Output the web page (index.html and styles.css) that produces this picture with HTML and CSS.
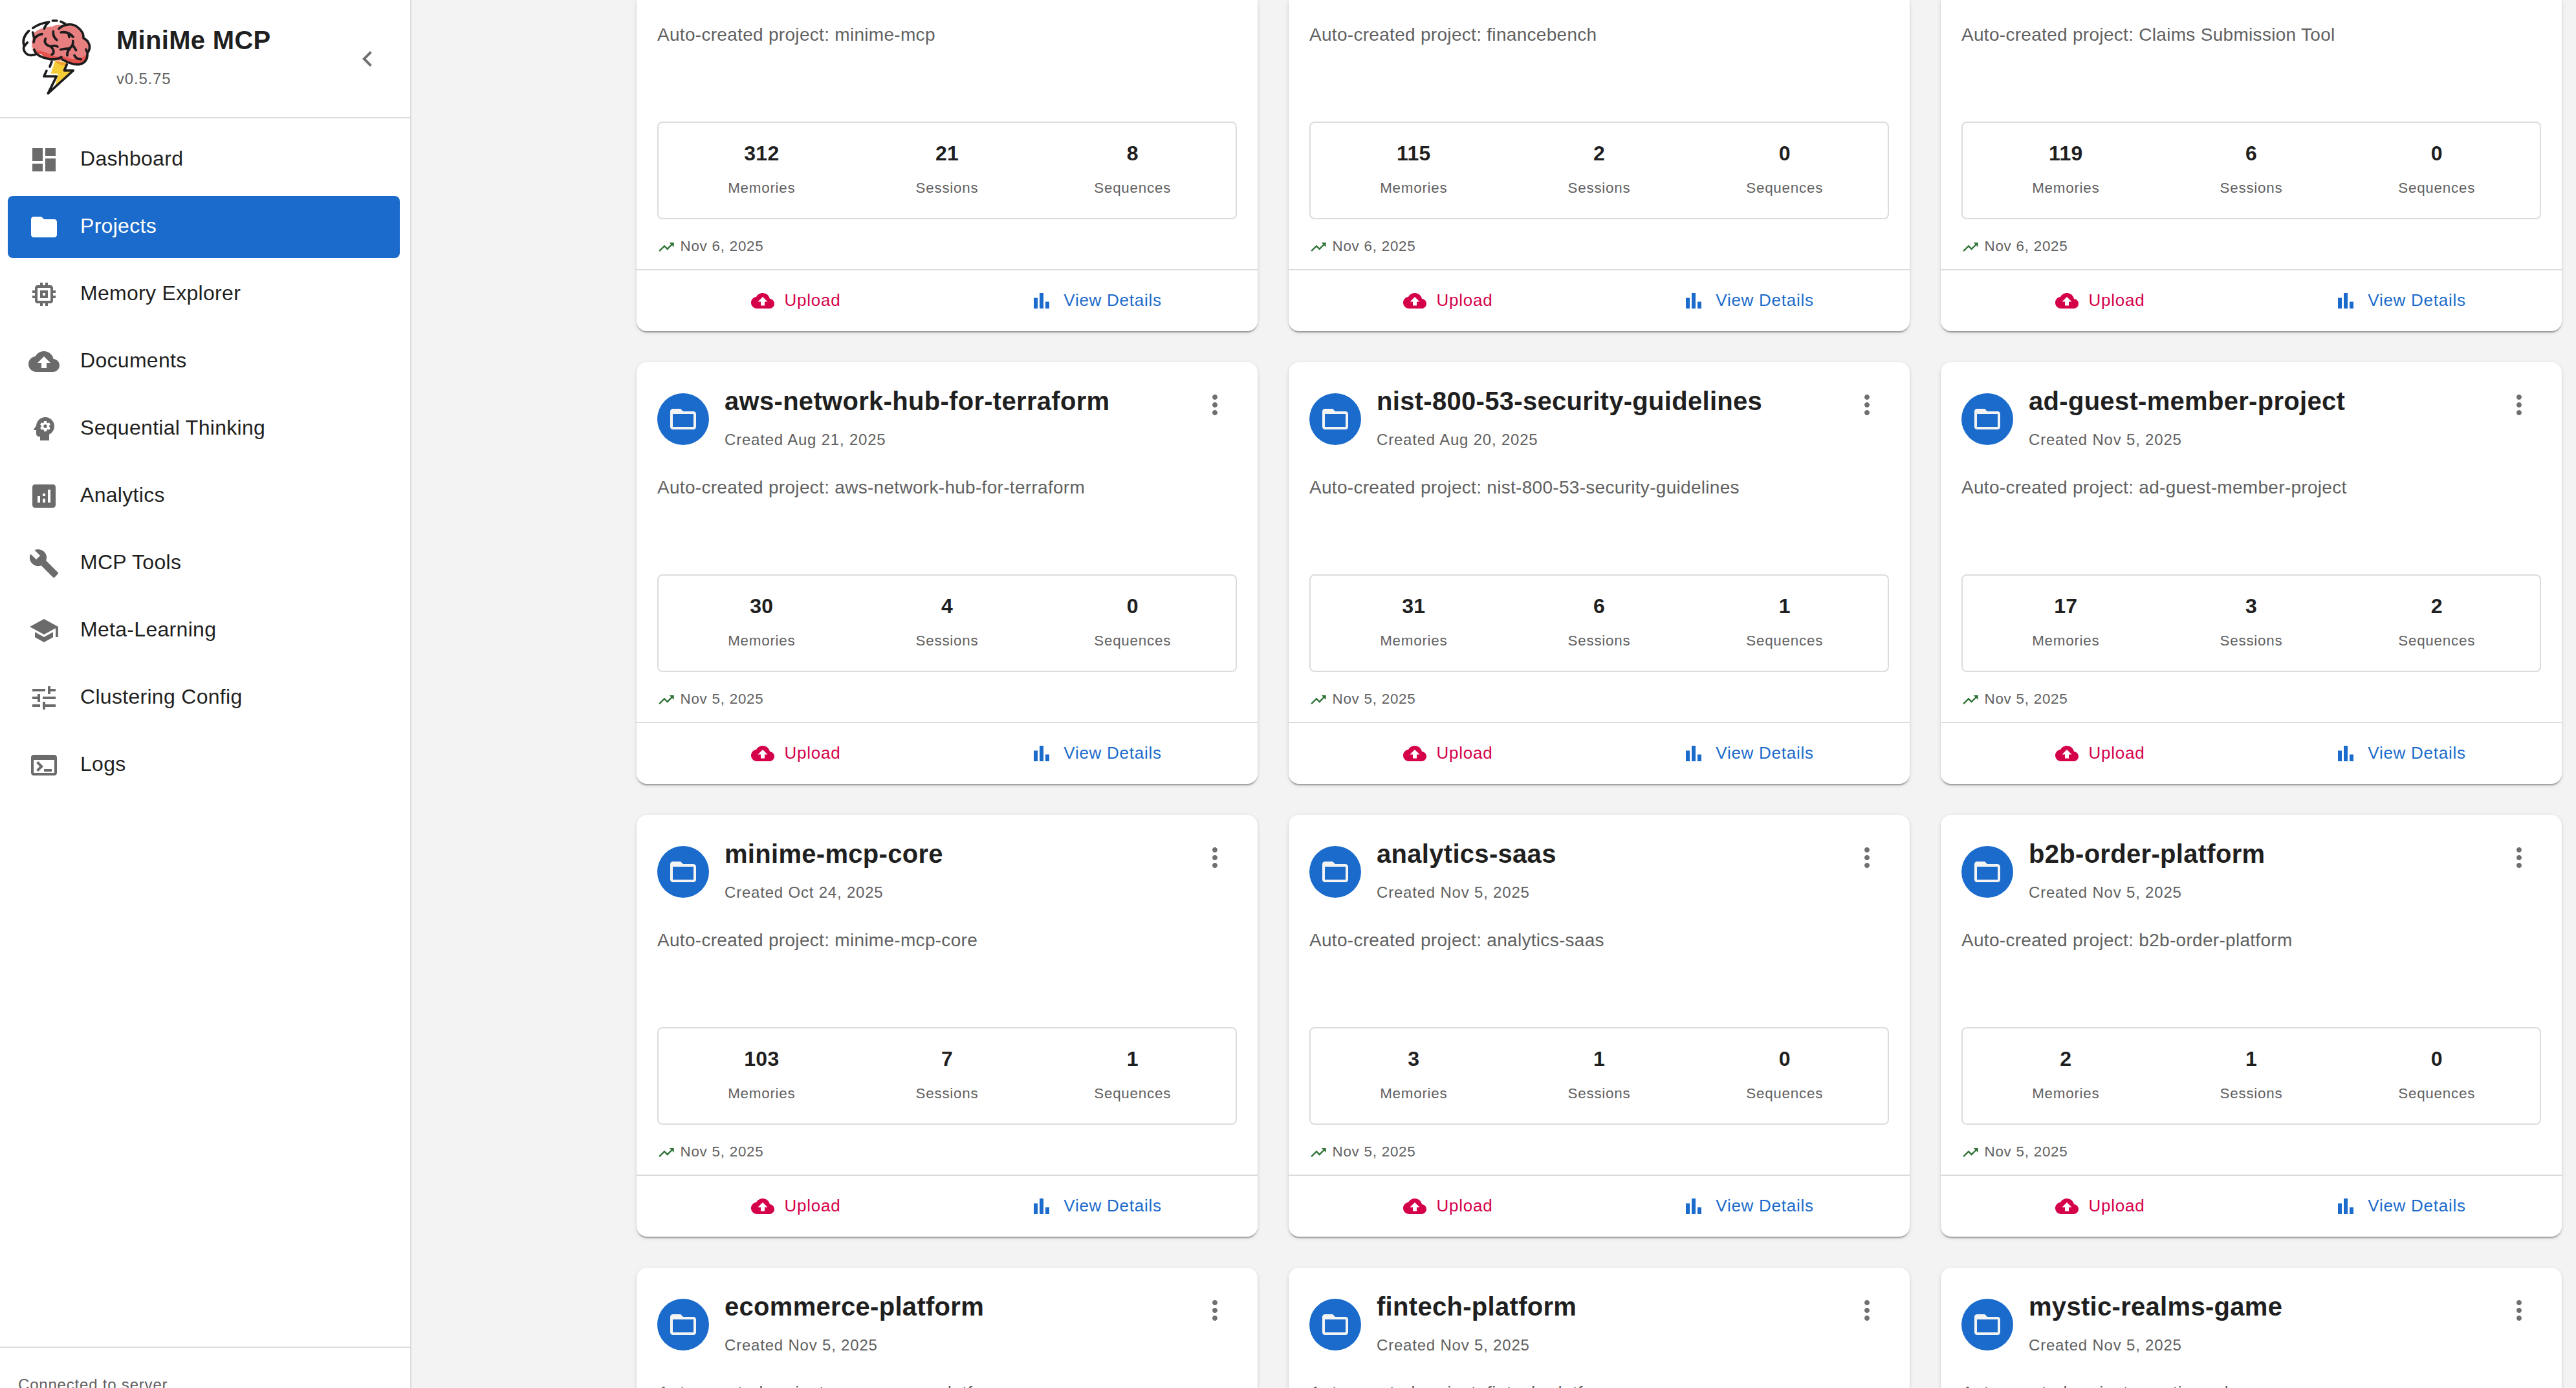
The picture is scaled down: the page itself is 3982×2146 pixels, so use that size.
FILE: index.html
```html
<!DOCTYPE html>
<html lang="en">
<head>
  <meta charset="UTF-8">
  <meta name="viewport" content="width=device-width, initial-scale=1.0">
  <title>MiniMe MCP</title>
  <link rel="stylesheet" href="styles.css">
</head>
<body>
  <svg class="sprite" aria-hidden="true">
    <symbol id="dashboard" viewBox="0 0 24 24"><path d="M3 13h8V3H3v10zm0 8h8v-6H3v6zm10 0h8V11h-8v10zm0-18v6h8V3h-8z"/></symbol>
    <symbol id="folder" viewBox="0 0 24 24"><path d="M10 4H4c-1.1 0-1.99.9-1.99 2L2 18c0 1.1.9 2 2 2h16c1.1 0 2-.9 2-2V8c0-1.1-.9-2-2-2h-8l-2-2z"/></symbol>
    <symbol id="memory" viewBox="0 0 24 24"><path d="M15 9H9v6h6V9zm-2 4h-2v-2h2v2zm8-2V9h-2V7c0-1.1-.9-2-2-2h-2V3h-2v2h-2V3H9v2H7c-1.1 0-2 .9-2 2v2H3v2h2v2H3v2h2v2c0 1.1.9 2 2 2h2v2h2v-2h2v2h2v-2h2c1.1 0 2-.9 2-2v-2h2v-2h-2v-2h2zm-4 6H7V7h10v10z"/></symbol>
    <symbol id="cloud" viewBox="0 0 24 24"><path d="M19.35 10.04C18.67 6.59 15.64 4 12 4 9.11 4 6.6 5.64 5.35 8.04 2.34 8.36 0 10.91 0 14c0 3.31 2.69 6 6 6h13c2.76 0 5-2.24 5-5 0-2.64-2.05-4.78-4.65-4.96zM14 13v4h-4v-4H7l5-5 5 5h-3z"/></symbol>
    <symbol id="psychology" viewBox="0 0 24 24"><path d="M13 8.57c-.79 0-1.43.64-1.43 1.43s.64 1.43 1.43 1.43 1.43-.64 1.43-1.43-.64-1.43-1.43-1.43z"/><path d="M13 3C9.25 3 6.2 5.94 6.02 9.64L4.1 12.2c-.25.33-.01.8.4.8H6v3c0 1.1.9 2 2 2h1v3h7v-4.68c2.36-1.12 4-3.53 4-6.32 0-3.87-3.13-7-7-7zm3 7c0 .13-.01.26-.02.39l.83.66c.08.06.1.16.05.25l-.8 1.39c-.05.09-.16.12-.24.09l-.99-.4c-.21.16-.43.29-.67.39L14 13.83c-.01.1-.1.17-.2.17h-1.6c-.1 0-.18-.07-.2-.17l-.15-1.06c-.25-.1-.47-.23-.68-.39l-.99.4c-.09.03-.2 0-.25-.09l-.8-1.39c-.05-.08-.03-.19.05-.25l.84-.66c-.01-.13-.02-.26-.02-.39s.02-.27.04-.39l-.85-.66c-.08-.06-.1-.16-.05-.26l.8-1.38c.05-.09.15-.12.24-.09l1 .4c.2-.15.43-.29.67-.39L12 6.17c.02-.1.1-.17.2-.17h1.6c.1 0 .18.07.2.17l.15 1.06c.24.1.46.23.67.39l1-.4c.09-.03.2 0 .24.09l.8 1.38c.05.09.03.2-.05.26l-.85.66c.03.12.04.25.04.39z"/></symbol>
    <symbol id="analytics" viewBox="0 0 24 24"><path d="M19 3H5c-1.1 0-2 .9-2 2v14c0 1.1.9 2 2 2h14c1.1 0 2-.9 2-2V5c0-1.1-.9-2-2-2zM9 17H7v-5h2v5zm4 0h-2v-3h2v3zm0-5h-2v-2h2v2zm4 5h-2V7h2v10z"/></symbol>
    <symbol id="build" viewBox="0 0 24 24"><path d="m22.7 19-9.1-9.1c.9-2.3.4-5-1.5-6.9-2-2-5-2.4-7.4-1.3L9 6 6 9 1.6 4.7C.4 7.1.9 10.1 2.9 12.1c1.9 1.9 4.6 2.4 6.9 1.5l9.1 9.1c.4.4 1 .4 1.4 0l2.3-2.3c.5-.4.5-1.1.1-1.4z"/></symbol>
    <symbol id="school" viewBox="0 0 24 24"><path d="M5 13.18v4L12 21l7-3.82v-4L12 17l-7-3.82zM12 3 1 9l11 6 9-4.91V17h2V9L12 3z"/></symbol>
    <symbol id="tune" viewBox="0 0 24 24"><path d="M3 17v2h6v-2H3zM3 5v2h10V5H3zm10 16v-2h8v-2h-8v-2h-2v6h2zM7 9v2H3v2h4v2h2V9H7zm14 4v-2H11v2h10zm-6-4h2V7h4V5h-4V3h-2v6z"/></symbol>
    <symbol id="terminal" viewBox="0 0 24 24"><path d="M20 4H4c-1.11 0-2 .9-2 2v12c0 1.1.89 2 2 2h16c1.1 0 2-.9 2-2V6c0-1.1-.89-2-2-2zm0 14H4V8h16v10zm-2-1h-6v-2h6v2zM7.5 17l-1.41-1.41L8.67 13l-2.59-2.59L7.5 9l4 4-4 4z"/></symbol>
    <symbol id="folder-open" viewBox="0 0 24 24"><path d="M20 6h-8l-2-2H4c-1.1 0-1.99.9-1.99 2L2 18c0 1.1.9 2 2 2h16c1.1 0 2-.9 2-2V8c0-1.1-.9-2-2-2zm0 12H4V8h16v10z"/></symbol>
    <symbol id="trending" viewBox="0 0 24 24"><path d="m16 6 2.29 2.29-4.88 4.88-4-4L2 16.59 3.41 18l6-6 4 4 6.3-6.29L22 12V6z"/></symbol>
    <symbol id="bars" viewBox="0 0 24 24"><path d="M4 9h4v11H4zm12 4h4v7h-4zm-6-9h4v16h-4z"/></symbol>
    <symbol id="more" viewBox="0 0 24 24"><path d="M12 8c1.1 0 2-.9 2-2s-.9-2-2-2-2 .9-2 2 .9 2 2 2zm0 2c-1.1 0-2 .9-2 2s.9 2 2 2 2-.9 2-2-.9-2-2-2zm0 6c-1.1 0-2 .9-2 2s.9 2 2 2 2-.9 2-2-.9-2-2-2z"/></symbol>
    <symbol id="chevron" viewBox="0 0 24 24"><path d="M15.41 7.41 14 6l-6 6 6 6 1.41-1.41L10.83 12z"/></symbol>
  </svg>

  <aside class="sidebar">
    <header class="brand">
      <svg class="logo" viewBox="0 0 390 390">
        <!-- brain -->
        <path fill="#e77f80" d="M92 100C112 72 150 66 185 62c20-10 45-6 58-2 30-8 60 4 72 28l14 25c18 10 28 30 22 52-6 14-12 18-14 32 4 22-10 38-30 42-30 4-55-8-72-20-30 6-75-2-95-28-24 0-44-16-52-36 0-30 4-42 5-55z"/>
        <path fill="#e5534d" d="M82 148c4 18 10 26 24 27 22-2 50 8 74 22 20 8 40 4 62 6 30 14 60 12 82 2 10-4 14-10 16-20 2 20 0 38-20 50-24 12-62 6-90-18-40 6-80-2-98-26-26 2-46-14-50-43z"/>
        <!-- lightning bolt -->
        <path fill="#f6cc36" d="M196 220l56 12-18 37 38 2-76 66 14-56h-34z"/>
        <path fill="#f0a330" d="M198 221l54 12-5 10c-20 2-36-4-46-14z"/>
        <g fill="none" stroke="#1c1c1c" stroke-width="11" stroke-linecap="round" stroke-linejoin="round">
          <path d="M184 36h20M222 40l20 10M93 70c22-16 46-24 74-28-12 10-18 18-22 31"/>
          <path d="M74 83C52 104 44 130 52 153c-8 20 8 44 32 43l18-2"/>
          <path d="M67 137l-14 17M213 73c26-24 64-26 88-6 18 14 28 28 26 50 26 12 38 42 20 66-4-4-8-8-8-14"/>
          <path d="M345 184c2 28-8 48-36 54-24 4-52-6-80-22"/>
          <path d="M99 170c2 20 30 36 62 42 24 8 50 0 64-7"/>
          <path d="M92 90c2 14 4 20 8 28l-4 18M101 118c10-12 18-18 34-20M187 86c-2 18 4 30 17 40"/>
          <path d="M151 120c-8 16 0 28 24 36M180 193c12-6 12-20-4-37 10-4 20-6 31 0"/>
          <path d="M223 90c24-4 40 2 56 21M258 97l3 15M278 130c2 14-2 26-15 33M278 150l15 23"/>
          <path d="M221 170c16-4 28-6 43-4-10 10-14 18-12 31M285 197c6 12 16 18 30 18"/>
          <path d="M180 226l-9 23M156 268l-12 26h58l-39 79 117-106h-42l12-28"/>
        </g>
      </svg>
      <div class="brand-text">
        <h1 class="brand-name">MiniMe MCP</h1>
        <p class="brand-version">v0.5.75</p>
      </div>
      <button class="icon-btn" aria-label="Collapse"><svg class="icon"><use href="#chevron"/></svg></button>
    </header>

    <nav class="nav">
      <a class="nav-item"><svg class="icon"><use href="#dashboard"/></svg><span>Dashboard</span></a>
      <a class="nav-item active"><svg class="icon"><use href="#folder"/></svg><span>Projects</span></a>
      <a class="nav-item"><svg class="icon"><use href="#memory"/></svg><span>Memory Explorer</span></a>
      <a class="nav-item"><svg class="icon"><use href="#cloud"/></svg><span>Documents</span></a>
      <a class="nav-item"><svg class="icon"><use href="#psychology"/></svg><span>Sequential Thinking</span></a>
      <a class="nav-item"><svg class="icon"><use href="#analytics"/></svg><span>Analytics</span></a>
      <a class="nav-item"><svg class="icon"><use href="#build"/></svg><span>MCP Tools</span></a>
      <a class="nav-item"><svg class="icon"><use href="#school"/></svg><span>Meta-Learning</span></a>
      <a class="nav-item"><svg class="icon"><use href="#tune"/></svg><span>Clustering Config</span></a>
      <a class="nav-item"><svg class="icon"><use href="#terminal"/></svg><span>Logs</span></a>
    </nav>

    <footer class="status">Connected to server</footer>
  </aside>

  <main class="content">
    <div class="grid" id="projects"></div>
  </main>

  <script>
    // name, created, memories, sessions, sequences, last activity
    const projects = [
      ['minime-mcp', '', 312, 21, 8, 'Nov 6, 2025'],
      ['financebench', '', 115, 2, 0, 'Nov 6, 2025'],
      ['Claims Submission Tool', '', 119, 6, 0, 'Nov 6, 2025'],
      ['aws-network-hub-for-terraform', 'Aug 21, 2025', 30, 4, 0, 'Nov 5, 2025'],
      ['nist-800-53-security-guidelines', 'Aug 20, 2025', 31, 6, 1, 'Nov 5, 2025'],
      ['ad-guest-member-project', 'Nov 5, 2025', 17, 3, 2, 'Nov 5, 2025'],
      ['minime-mcp-core', 'Oct 24, 2025', 103, 7, 1, 'Nov 5, 2025'],
      ['analytics-saas', 'Nov 5, 2025', 3, 1, 0, 'Nov 5, 2025'],
      ['b2b-order-platform', 'Nov 5, 2025', 2, 1, 0, 'Nov 5, 2025'],
      ['ecommerce-platform', 'Nov 5, 2025'],
      ['fintech-platform', 'Nov 5, 2025'],
      ['mystic-realms-game', 'Nov 5, 2025']
    ];

    const icon = (name, cls) => `<svg class="icon ${cls || ''}"><use href="#${name}"/></svg>`;

    function header(name, created) {
      return `
        <div class="card-header">
          <div class="avatar">${icon('folder-open')}</div>
          <div class="card-heading">
            <h2 class="card-title">${name}</h2>
            <p class="card-created">Created ${created}</p>
          </div>
          <button class="icon-btn" aria-label="More">${icon('more')}</button>
        </div>`;
    }

    function details(memories, sessions, sequences, updated) {
      return `
        <div class="stats">
          <div class="stat"><strong>${memories}</strong><span>Memories</span></div>
          <div class="stat"><strong>${sessions}</strong><span>Sessions</span></div>
          <div class="stat"><strong>${sequences}</strong><span>Sequences</span></div>
        </div>
        <div class="updated">${icon('trending', 'icon-xs')}<span>${updated}</span></div>
        <div class="actions">
          <button class="btn btn-upload">${icon('cloud', 'icon-sm')}<span>Upload</span></button>
          <button class="btn btn-view">${icon('bars', 'icon-sm')}<span>View Details</span></button>
        </div>`;
    }

    document.getElementById('projects').innerHTML = projects.map(([name, created, ...rest]) => `
      <article class="card ${created ? '' : 'card-cut'}">
        ${created ? header(name, created) : ''}
        <p class="card-desc">Auto-created project: ${name}</p>
        ${rest.length ? details(...rest) : ''}
      </article>`).join('');
  </script>
</body>
</html>
```
FILE: styles.css
```css
* {
  box-sizing: border-box;
}

body {
  margin: 0;
  height: 100vh;
  display: flex;
  overflow: hidden;
  background-color: #f3f3f3;
  color: #1f1f1f;
  font-family: "Liberation Sans", Helvetica, Arial, sans-serif;
}

h1, h2, p {
  margin: 0;
}

button {
  border: none;
  background: none;
  font-family: inherit;
  cursor: pointer;
}

.sprite {
  display: none;
}

.icon {
  width: 48px;
  height: 48px;
  fill: currentColor;
  flex-shrink: 0;
}

.icon-sm {
  width: 36px;
  height: 36px;
}

.icon-xs {
  width: 28px;
  height: 28px;
  color: #2e7235;
}

.icon-btn {
  display: flex;
  padding: 10px;
  color: #6f6f6f;
}

/* Sidebar */
.sidebar {
  width: 636px;
  height: 100vh;
  flex-shrink: 0;
  display: flex;
  flex-direction: column;
  background: #fff;
  border-right: 2px solid #dcdcdc;
}

.brand {
  height: 183px;
  display: flex;
  align-items: center;
  padding: 0 32px 0 20px;
  border-bottom: 2px solid #dcdcdc;
}

.logo {
  width: 130px;
  height: 130px;
  margin: 0 30px 11px 0;
}

.brand-text {
  flex: 1;
  padding-bottom: 10px;
}

.brand-name {
  font-size: 40px;
  line-height: 64px;
  letter-spacing: 0.3px;
}

.brand-version {
  font-size: 24px;
  line-height: 40px;
  letter-spacing: 0.8px;
  margin-top: 8px;
  color: #616161;
}

.nav {
  flex: 1;
  display: flex;
  flex-direction: column;
  gap: 8px;
  padding: 16px 16px 0 12px;
}

.nav-item {
  height: 96px;
  display: flex;
  align-items: center;
  gap: 32px;
  padding: 0 32px;
  border-radius: 8px;
  font-size: 32px;
  letter-spacing: 0.3px;
}

.nav-item span {
  padding-bottom: 4px;
}

.nav-item .icon {
  color: #6b6b6b;
}

.nav-item.active,
.nav-item.active .icon {
  color: #fff;
}

.nav-item.active {
  background-color: #1a6bcb;
}

.status {
  height: 64px;
  padding: 37px 28px 0;
  border-top: 2px solid #dcdcdc;
  font-size: 24px;
  line-height: 40px;
  letter-spacing: 0.8px;
  color: #616161;
  overflow: hidden;
}

/* Project cards */
.content {
  flex: 1;
  height: 100vh;
  padding: 0 22px 0 348px;
  overflow: hidden;
}

.grid {
  display: grid;
  grid-template-columns: repeat(3, 960px);
  gap: 48px;
}

.card {
  height: 652px;
  display: flex;
  flex-direction: column;
  padding: 32px 32px 0;
  background: #fff;
  border-radius: 16px;
  box-shadow: 0 4px 2px -2px rgba(0, 0, 0, 0.2), 0 2px 2px 0 rgba(0, 0, 0, 0.14), 0 2px 6px 0 rgba(0, 0, 0, 0.12);
}

/* first row, scrolled past its header */
.card-cut {
  height: 512px;
  padding-top: 34px;
  border-radius: 0 0 16px 16px;
}

.card-header {
  height: 142px;
  display: flex;
  align-items: flex-start;
}

.avatar {
  width: 80px;
  height: 80px;
  display: flex;
  align-items: center;
  justify-content: center;
  margin: 16px 24px 0 0;
  border-radius: 50%;
  background: #1a6bcb;
  color: #f3f3f3;
}

.card-heading {
  flex: 1;
}

.card-title {
  font-size: 40px;
  line-height: 52px;
  letter-spacing: 0.3px;
  margin-top: 2px;
}

.card-created {
  font-size: 24px;
  line-height: 40px;
  letter-spacing: 0.8px;
  margin-top: 14px;
  color: #616161;
}

.card-desc {
  height: 154px;
  font-size: 28px;
  line-height: 40px;
  letter-spacing: 0.3px;
  color: #616161;
}

.stats {
  height: 151px;
  display: flex;
  padding: 23px 16px 0;
  border: 2px solid #dcdcdc;
  border-radius: 8px;
}

.stat {
  flex: 1;
  display: flex;
  flex-direction: column;
  align-items: center;
  gap: 12px;
}

.stat strong {
  font-size: 32px;
  line-height: 48px;
  letter-spacing: 0.3px;
}

.stat span {
  font-size: 22.4px;
  line-height: 36px;
  letter-spacing: 0.75px;
  color: #616161;
}

.updated {
  height: 40px;
  display: flex;
  align-items: center;
  gap: 7.5px;
  margin-top: 23px;
  font-size: 22.4px;
  letter-spacing: 0.75px;
  color: #616161;
}

.updated span {
  padding-bottom: 2px;
}

.actions {
  height: 96px;
  display: flex;
  margin: auto -32px 0;
  padding: 0 16px;
  border-top: 2px solid #dcdcdc;
}

.btn {
  flex: 1;
  display: flex;
  align-items: center;
  justify-content: center;
  gap: 16px;
  padding: 0 10px 0 6px;
  font-size: 26px;
  letter-spacing: 0.74px;
}

.btn span {
  padding-bottom: 2px;
}

.btn-upload {
  color: #d5004a;
}

.btn-view {
  color: #1a6bcb;
}
```
